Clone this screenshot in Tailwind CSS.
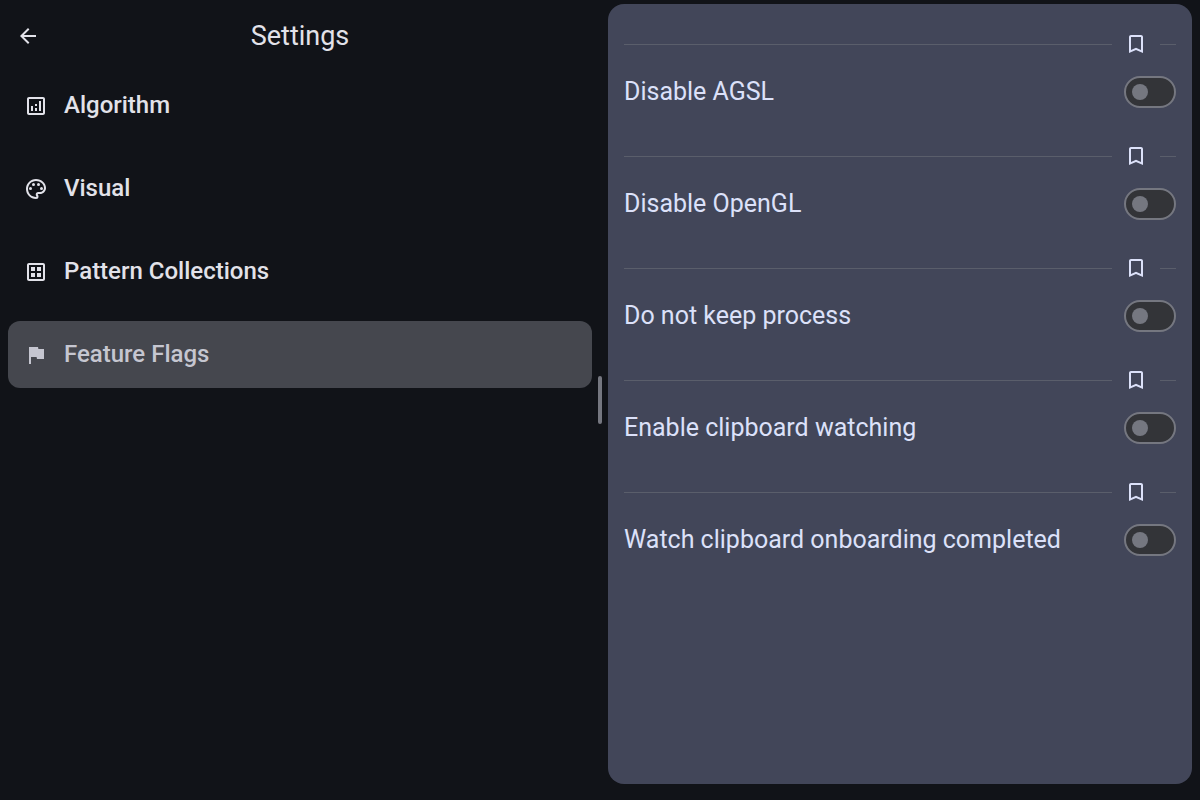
<!DOCTYPE html>
<html lang="en">
<head>
<meta charset="utf-8">
<meta name="viewport" content="width=device-width, initial-scale=1">
<title>Settings</title>
<script src="https://cdn.jsdelivr.net/npm/@tailwindcss/browser@4"></script>
</head>
<body class="flex min-h-screen bg-[#111318] font-['Roboto',sans-serif] text-[#e2e2e9]">
  <section class="flex w-1/2 flex-col">
    <header class="grid h-[72px] grid-cols-[48px_1fr_48px] items-center px-1">
      <button type="button" aria-label="Back" class="flex size-12 items-center justify-center">
        <svg class="size-6" viewBox="0 0 24 24" fill="currentColor" aria-hidden="true"><path d="M20 11H7.830l5.590-5.590L12 4l-8 8 8 8 1.410-1.410L7.830 13H20v-2z"/></svg>
      </button>
      <h1 class="text-center text-[27px] leading-9">Settings</h1>
    </header>
    <nav aria-label="Settings sections" class="flex flex-col gap-4 px-2 text-2xl font-medium">
      <a href="#algorithm" class="flex h-[67px] items-center gap-4 rounded-xl px-4">
        <svg class="size-6" viewBox="0 0 24 24" fill="currentColor" aria-hidden="true"><path d="M19 3H5c-1.100 0-2 .9-2 2v14c0 1.100.9 2 2 2h14c1.100 0 2-.9 2-2V5c0-1.100-.9-2-2-2zm0 16H5V5h14v14zM7 12h2v5H7zM15 7h2v10h-2zM11 14h2v3h-2zM11 10h2v2h-2z"/></svg>
        <span class="pb-px">Algorithm</span>
      </a>
      <a href="#visual" class="flex h-[67px] items-center gap-4 rounded-xl px-4">
        <svg class="size-6" viewBox="0 0 24 24" fill="currentColor" aria-hidden="true"><path d="M12 22C6.490 22 2 17.510 2 12S6.490 2 12 2s10 4.040 10 9c0 3.310-2.690 6-6 6h-1.770c-.28 0-.5.22-.5.5 0 .12.050.23.130.33.410.47.640 1.060.640 1.670A2.500 2.500 0 0 1 12 22zm0-18c-4.410 0-8 3.590-8 8s3.590 8 8 8c.28 0 .5-.22.5-.5a.54.54 0 0 0-.14-.35c-.41-.46-.63-1.050-.63-1.650a2.500 2.500 0 0 1 2.500-2.500H16c2.210 0 4-1.790 4-4 0-3.860-3.590-7-8-7z"/><circle cx="6.500" cy="11.500" r="1.500"/><circle cx="9.500" cy="7.500" r="1.500"/><circle cx="14.500" cy="7.500" r="1.500"/><circle cx="17.500" cy="11.500" r="1.500"/></svg>
        <span class="pb-px">Visual</span>
      </a>
      <a href="#patterns" class="flex h-[67px] items-center gap-4 rounded-xl px-4">
        <svg class="size-6" viewBox="0 0 24 24" fill="currentColor" aria-hidden="true"><path d="M19 3H5c-1.100 0-2 .9-2 2v14c0 1.100.9 2 2 2h14c1.100 0 2-.9 2-2V5c0-1.100-.9-2-2-2zm0 16H5V5h14v14zM7 7h4v4H7zM13 7h4v4h-4zM7 13h4v4H7zM13 13h4v4h-4z"/></svg>
        <span class="pb-px">Pattern Collections</span>
      </a>
      <a href="#flags" aria-current="page" class="flex h-[67px] items-center gap-4 rounded-xl bg-[#45474e] px-4 text-[#c5c6d0]">
        <svg class="size-6" viewBox="0 0 24 24" fill="currentColor" aria-hidden="true"><path d="M14.400 6 14 4H5v17h2v-7h5.600l.4 2h7V6z"/></svg>
        <span class="pb-px">Feature Flags</span>
      </a>
    </nav>
  </section>

  <div role="separator" aria-orientation="vertical" class="-mx-0.5 flex w-1 items-center">
    <div class="h-12 w-1 rounded-full bg-[#757780]"></div>
  </div>

  <main class="mt-1 mr-2 mb-4 ml-2 flex flex-1 flex-col gap-4 rounded-2xl bg-[#424659] p-4 text-[25px] leading-8 text-[#dce1f9]">
    <section>
      <div class="flex items-center">
        <hr class="flex-1 border-[#5a5e6b]">
        <button type="button" aria-label="Bookmark Disable AGSL" class="flex size-12 items-center justify-center"><svg class="size-6" viewBox="0 0 24 24" fill="currentColor" aria-hidden="true"><path d="M17 3H7c-1.100 0-2 .9-2 2v16l7-3 7 3V5c0-1.100-.9-2-2-2zm0 15-5-2.180L7 18V5h10v13z"/></svg></button>
        <hr class="w-4 border-[#5a5e6b]">
      </div>
      <label class="flex h-12 items-center justify-between">Disable AGSL
        <input type="checkbox" role="switch" class="flex h-8 w-[52px] appearance-none items-center rounded-full border-2 border-[#757780] bg-[#333438] px-1.5 before:size-4 before:rounded-full before:bg-[#757780] checked:justify-end">
      </label>
    </section>
    <section>
      <div class="flex items-center">
        <hr class="flex-1 border-[#5a5e6b]">
        <button type="button" aria-label="Bookmark Disable OpenGL" class="flex size-12 items-center justify-center"><svg class="size-6" viewBox="0 0 24 24" fill="currentColor" aria-hidden="true"><path d="M17 3H7c-1.100 0-2 .9-2 2v16l7-3 7 3V5c0-1.100-.9-2-2-2zm0 15-5-2.180L7 18V5h10v13z"/></svg></button>
        <hr class="w-4 border-[#5a5e6b]">
      </div>
      <label class="flex h-12 items-center justify-between">Disable OpenGL
        <input type="checkbox" role="switch" class="flex h-8 w-[52px] appearance-none items-center rounded-full border-2 border-[#757780] bg-[#333438] px-1.5 before:size-4 before:rounded-full before:bg-[#757780] checked:justify-end">
      </label>
    </section>
    <section>
      <div class="flex items-center">
        <hr class="flex-1 border-[#5a5e6b]">
        <button type="button" aria-label="Bookmark Do not keep process" class="flex size-12 items-center justify-center"><svg class="size-6" viewBox="0 0 24 24" fill="currentColor" aria-hidden="true"><path d="M17 3H7c-1.100 0-2 .9-2 2v16l7-3 7 3V5c0-1.100-.9-2-2-2zm0 15-5-2.180L7 18V5h10v13z"/></svg></button>
        <hr class="w-4 border-[#5a5e6b]">
      </div>
      <label class="flex h-12 items-center justify-between">Do not keep process
        <input type="checkbox" role="switch" class="flex h-8 w-[52px] appearance-none items-center rounded-full border-2 border-[#757780] bg-[#333438] px-1.5 before:size-4 before:rounded-full before:bg-[#757780] checked:justify-end">
      </label>
    </section>
    <section>
      <div class="flex items-center">
        <hr class="flex-1 border-[#5a5e6b]">
        <button type="button" aria-label="Bookmark Enable clipboard watching" class="flex size-12 items-center justify-center"><svg class="size-6" viewBox="0 0 24 24" fill="currentColor" aria-hidden="true"><path d="M17 3H7c-1.100 0-2 .9-2 2v16l7-3 7 3V5c0-1.100-.9-2-2-2zm0 15-5-2.180L7 18V5h10v13z"/></svg></button>
        <hr class="w-4 border-[#5a5e6b]">
      </div>
      <label class="flex h-12 items-center justify-between">Enable clipboard watching
        <input type="checkbox" role="switch" class="flex h-8 w-[52px] appearance-none items-center rounded-full border-2 border-[#757780] bg-[#333438] px-1.5 before:size-4 before:rounded-full before:bg-[#757780] checked:justify-end">
      </label>
    </section>
    <section>
      <div class="flex items-center">
        <hr class="flex-1 border-[#5a5e6b]">
        <button type="button" aria-label="Bookmark Watch clipboard onboarding completed" class="flex size-12 items-center justify-center"><svg class="size-6" viewBox="0 0 24 24" fill="currentColor" aria-hidden="true"><path d="M17 3H7c-1.100 0-2 .9-2 2v16l7-3 7 3V5c0-1.100-.9-2-2-2zm0 15-5-2.180L7 18V5h10v13z"/></svg></button>
        <hr class="w-4 border-[#5a5e6b]">
      </div>
      <label class="flex h-12 items-center justify-between">Watch clipboard onboarding completed
        <input type="checkbox" role="switch" class="flex h-8 w-[52px] appearance-none items-center rounded-full border-2 border-[#757780] bg-[#333438] px-1.5 before:size-4 before:rounded-full before:bg-[#757780] checked:justify-end">
      </label>
    </section>
  </main>
</body>
</html>
